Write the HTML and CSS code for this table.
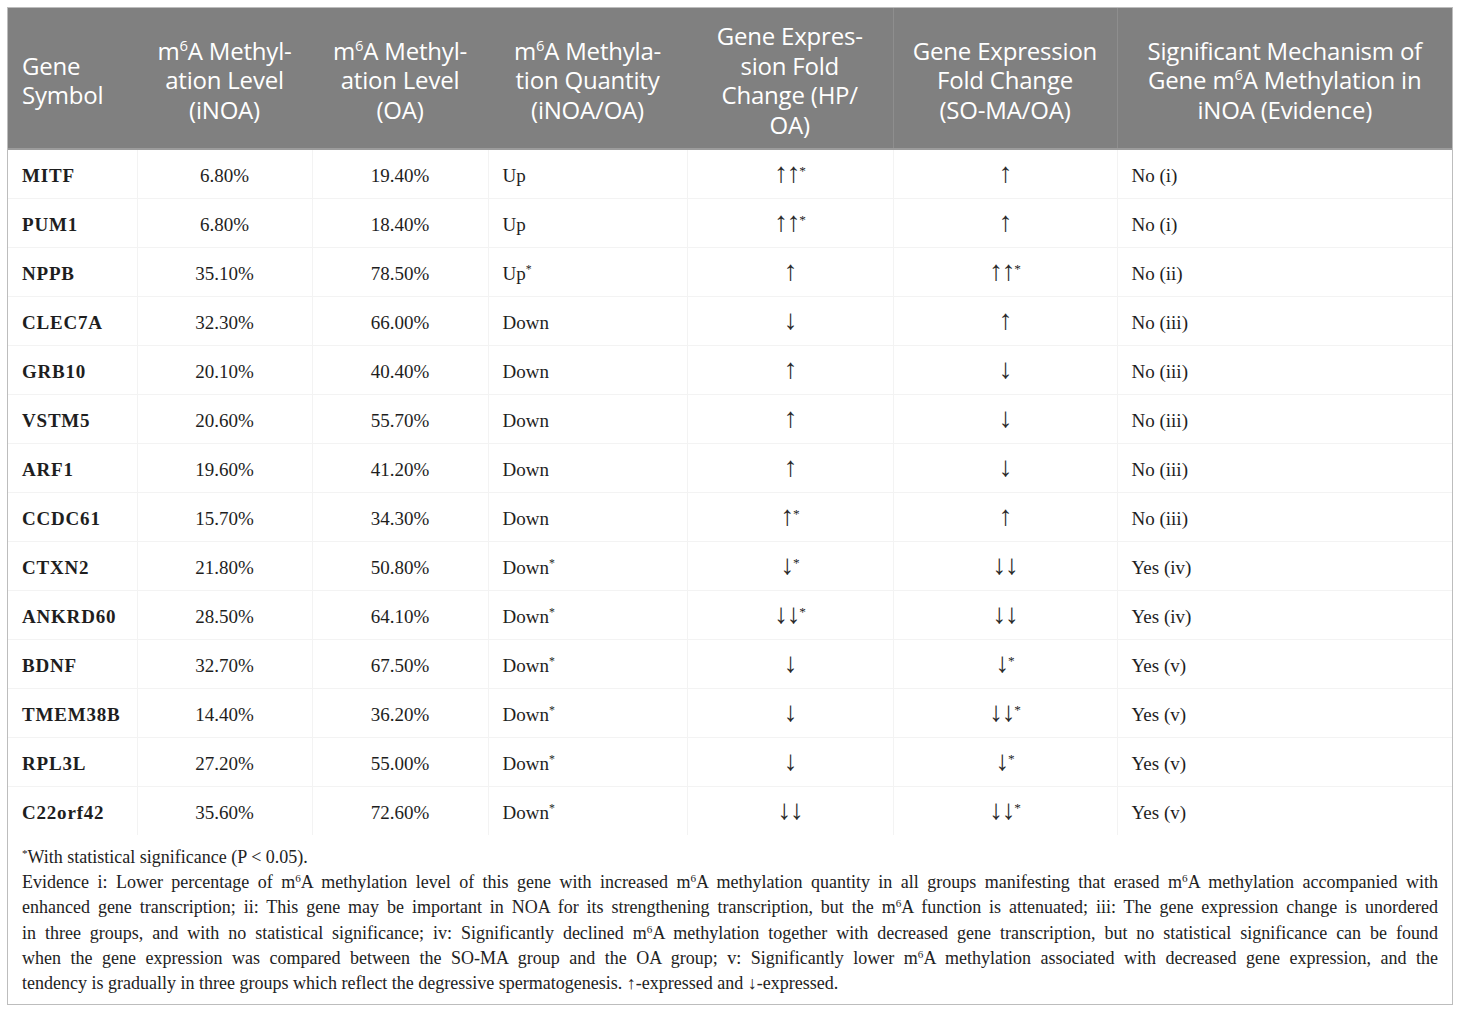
FILE: index.html
```html
<!DOCTYPE html>
<html lang="en">
<head>
<meta charset="utf-8">
<title>Table</title>
<link rel="stylesheet" href="styles.css">
</head>
<body>
<div class="frame">
  <table class="data">
    <colgroup>
      <col class="c1"><col class="c2"><col class="c3"><col class="c4"><col class="c5"><col class="c6"><col class="c7">
    </colgroup>
    <thead>
      <tr>
        <th class="left">Gene<br>Symbol</th>
        <th>m<sup>6</sup>A Methyl-<br>ation Level<br>(iNOA)</th>
        <th>m<sup>6</sup>A Methyl-<br>ation Level<br>(OA)</th>
        <th>m<sup>6</sup>A Methyla-<br>tion Quantity<br>(iNOA/OA)</th>
        <th>Gene Expres-<br>sion Fold<br>Change (HP/<br>OA)</th>
        <th class="sep">Gene Expression<br>Fold Change<br>(SO-MA/OA)</th>
        <th class="sep">Significant Mechanism of<br>Gene m<sup>6</sup>A Methylation in<br>iNOA (Evidence)</th>
      </tr>
    </thead>
    <tbody>
      <tr><td class="g">MITF</td><td class="ct">6.80%</td><td class="ct">19.40%</td><td>Up</td><td class="ct"><span class="ar">↑↑</span><sup>*</sup></td><td class="ct"><span class="ar">↑</span></td><td>No (i)</td></tr>
      <tr><td class="g">PUM1</td><td class="ct">6.80%</td><td class="ct">18.40%</td><td>Up</td><td class="ct"><span class="ar">↑↑</span><sup>*</sup></td><td class="ct"><span class="ar">↑</span></td><td>No (i)</td></tr>
      <tr><td class="g">NPPB</td><td class="ct">35.10%</td><td class="ct">78.50%</td><td>Up<sup>*</sup></td><td class="ct"><span class="ar">↑</span></td><td class="ct"><span class="ar">↑↑</span><sup>*</sup></td><td>No (ii)</td></tr>
      <tr><td class="g">CLEC7A</td><td class="ct">32.30%</td><td class="ct">66.00%</td><td>Down</td><td class="ct"><span class="ar">↓</span></td><td class="ct"><span class="ar">↑</span></td><td>No (iii)</td></tr>
      <tr><td class="g">GRB10</td><td class="ct">20.10%</td><td class="ct">40.40%</td><td>Down</td><td class="ct"><span class="ar">↑</span></td><td class="ct"><span class="ar">↓</span></td><td>No (iii)</td></tr>
      <tr><td class="g">VSTM5</td><td class="ct">20.60%</td><td class="ct">55.70%</td><td>Down</td><td class="ct"><span class="ar">↑</span></td><td class="ct"><span class="ar">↓</span></td><td>No (iii)</td></tr>
      <tr><td class="g">ARF1</td><td class="ct">19.60%</td><td class="ct">41.20%</td><td>Down</td><td class="ct"><span class="ar">↑</span></td><td class="ct"><span class="ar">↓</span></td><td>No (iii)</td></tr>
      <tr><td class="g">CCDC61</td><td class="ct">15.70%</td><td class="ct">34.30%</td><td>Down</td><td class="ct"><span class="ar">↑</span><sup>*</sup></td><td class="ct"><span class="ar">↑</span></td><td>No (iii)</td></tr>
      <tr><td class="g">CTXN2</td><td class="ct">21.80%</td><td class="ct">50.80%</td><td>Down<sup>*</sup></td><td class="ct"><span class="ar">↓</span><sup>*</sup></td><td class="ct"><span class="ar">↓↓</span></td><td>Yes (iv)</td></tr>
      <tr><td class="g">ANKRD60</td><td class="ct">28.50%</td><td class="ct">64.10%</td><td>Down<sup>*</sup></td><td class="ct"><span class="ar">↓↓</span><sup>*</sup></td><td class="ct"><span class="ar">↓↓</span></td><td>Yes (iv)</td></tr>
      <tr><td class="g">BDNF</td><td class="ct">32.70%</td><td class="ct">67.50%</td><td>Down<sup>*</sup></td><td class="ct"><span class="ar">↓</span></td><td class="ct"><span class="ar">↓</span><sup>*</sup></td><td>Yes (v)</td></tr>
      <tr><td class="g">TMEM38B</td><td class="ct">14.40%</td><td class="ct">36.20%</td><td>Down<sup>*</sup></td><td class="ct"><span class="ar">↓</span></td><td class="ct"><span class="ar">↓↓</span><sup>*</sup></td><td>Yes (v)</td></tr>
      <tr><td class="g">RPL3L</td><td class="ct">27.20%</td><td class="ct">55.00%</td><td>Down<sup>*</sup></td><td class="ct"><span class="ar">↓</span></td><td class="ct"><span class="ar">↓</span><sup>*</sup></td><td>Yes (v)</td></tr>
      <tr><td class="g">C22orf42</td><td class="ct">35.60%</td><td class="ct">72.60%</td><td>Down<sup>*</sup></td><td class="ct"><span class="ar">↓↓</span></td><td class="ct"><span class="ar">↓↓</span><sup>*</sup></td><td>Yes (v)</td></tr>
    </tbody>
  </table>
  <div class="notes">
    <span class="line"><sup>*</sup>With statistical significance (P &lt; 0.05).</span>
    <span class="line jl">Evidence i: Lower percentage of m<sup>6</sup>A methylation level of this gene with increased m<sup>6</sup>A methylation quantity in all groups manifesting that erased m<sup>6</sup>A methylation accompanied with</span>
    <span class="line jl">enhanced gene transcription; ii: This gene may be important in NOA for its strengthening transcription, but the m<sup>6</sup>A function is attenuated; iii: The gene expression change is unordered</span>
    <span class="line jl">in three groups, and with no statistical significance; iv: Significantly declined m<sup>6</sup>A methylation together with decreased gene transcription, but no statistical significance can be found</span>
    <span class="line jl">when the gene expression was compared between the SO-MA group and the OA group; v: Significantly lower m<sup>6</sup>A methylation associated with decreased gene expression, and the</span>
    <span class="line">tendency is gradually in three groups which reflect the degressive spermatogenesis. ↑-expressed and ↓-expressed.</span>
  </div>
</div>
</body>
</html>
```

FILE: styles.css
```css
html, body {
  margin: 0;
  padding: 0;
  background: #ffffff;
}

body {
  padding: 7px;
  font-family: "Liberation Serif", "Times New Roman", serif;
  color: #1e1e1e;
}

.frame {
  width: 1444px;
  border: 1px solid #bdbdbd;
  box-sizing: content-box;
}

.data {
  width: 1444px;
  table-layout: fixed;
  border-collapse: collapse;
}

.c1 { width: 129px; }
.c2 { width: 175px; }
.c3 { width: 176px; }
.c4 { width: 199px; }
.c5 { width: 206px; }
.c6 { width: 224px; }
.c7 { width: 335px; }

.data thead th {
  background: #808080;
  color: #ffffff;
  font-family: "Open Sans", "Noto Sans", sans-serif;
  font-weight: 400;
  font-size: 24px;
  line-height: 29.5px;
  text-align: center;
  vertical-align: middle;
  height: 136px;
  padding: 4px 4px 0 4px;
  border-bottom: 2px solid #9c9c9c;
  letter-spacing: -0.2px;
}

.data thead th.left {
  text-align: left;
  padding-left: 14px;
}

.data thead th.sep {
  border-left: 1px solid #8e8e8e;
}

.data sup {
  font-size: 0.62em;
  line-height: 0;
  vertical-align: 0.6em;
}

.data tbody td {
  height: 45px;
  padding: 3px 14px 0 14px;
  font-size: 19px;
  line-height: 24px;
  vertical-align: middle;
  text-align: left;
  border-bottom: 1px solid #f3f3f3;
  border-left: 1px solid #f3f3f3;
}

.data tbody td:first-child {
  border-left: none;
}

.data tbody td.g {
  font-weight: 700;
  letter-spacing: 0.8px;
}

.data tbody td.ct {
  text-align: center;
}

.data tbody td.ct sup {
  font-size: 0.7em;
  vertical-align: 0.55em;
}

.ar {
  font-family: "Liberation Serif", serif;
  font-size: 28px;
  line-height: 0;
  color: #2a2a2a;
  letter-spacing: -1.5px;
}

.data tbody tr:last-child td {
  border-bottom: none;
}

.notes {
  padding: 10px 14px 8px 14px;
  font-size: 18px;
  line-height: 25.2px;
  color: #222222;
}

.notes .line {
  display: block;
  white-space: nowrap;
}

.notes .line.jl {
  white-space: normal;
  text-align: justify;
  text-align-last: justify;
}

.notes sup {
  font-size: 0.62em;
  line-height: 0;
  vertical-align: 0.55em;
}
```
